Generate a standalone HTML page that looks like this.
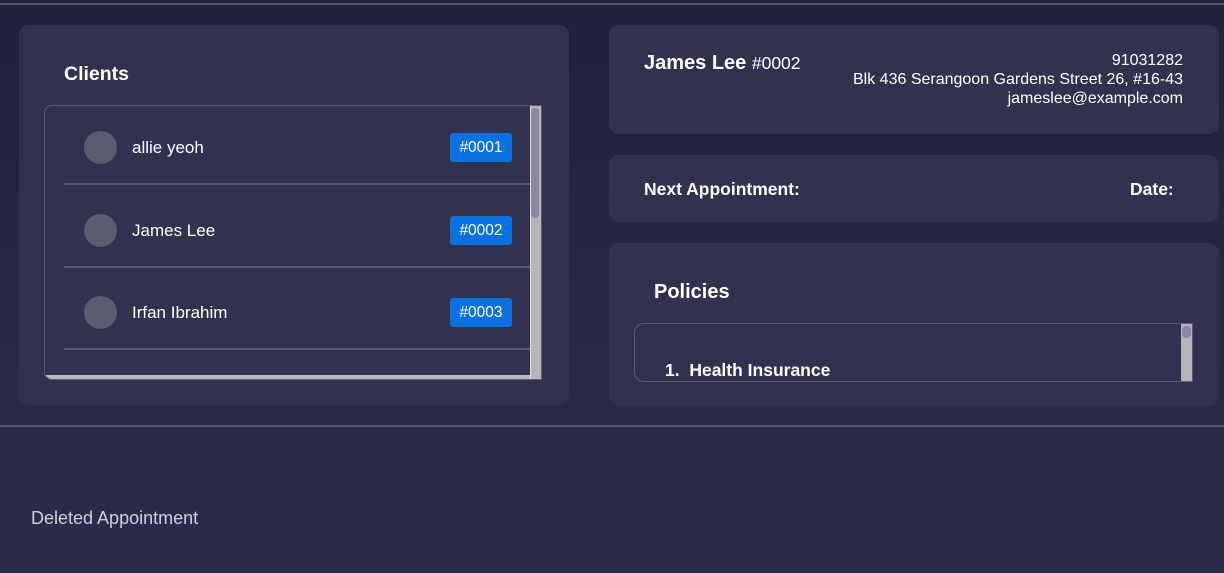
<!DOCTYPE html><html><head><style>
*{margin:0;padding:0;box-sizing:border-box}
body{width:1224px;height:573px;overflow:hidden;font-family:"Liberation Sans",sans-serif;color:#fff;background:linear-gradient(#20213d,#2a2a48 400px,#2c2c4a);position:relative}
.ab{position:absolute}
.panel{position:absolute;background:#323250;border-radius:10px}
.hr{position:absolute;left:0;width:1224px;height:2px;background:#55566a}
.av{position:absolute;left:39px;width:33px;height:33px;border-radius:50%;background:#5b5c6d}
.nm{position:absolute;left:87px;font-size:17px}
.tag{position:absolute;left:405px;width:62px;height:29px;background:#0a72e0;border-radius:3px;font-size:15.5px;text-align:center;line-height:29px}
.sep{position:absolute;left:19px;width:468px;height:2px;background:#5a5b6e}
</style></head><body>
<div class="hr" style="top:3px"></div>
<div class="panel" style="left:19px;top:25px;width:550px;height:380px"></div>
<div class="ab" style="left:64px;top:63px;font-size:19.5px;font-weight:bold">Clients</div>
<div class="ab" style="left:44px;top:105px;width:498px;height:275px;border:1px solid #5c5d70;border-radius:8px 0 0 8px;overflow:hidden">
 <div class="av" style="top:25px"></div><div class="nm" style="top:32px">allie yeoh</div><div class="tag" style="top:27px">#0001</div>
 <div class="sep" style="top:77px"></div>
 <div class="av" style="top:108px"></div><div class="nm" style="top:115px">James Lee</div><div class="tag" style="top:110px">#0002</div>
 <div class="sep" style="top:160px"></div>
 <div class="av" style="top:190px"></div><div class="nm" style="top:197px">Irfan Ibrahim</div><div class="tag" style="top:192px">#0003</div>
 <div class="sep" style="top:242px"></div>
 <div class="ab" style="left:0;bottom:0;width:498px;height:4px;background:#b8b8bc"></div>
 <div class="ab" style="right:0;top:0;width:11px;height:275px;background:#b5b5b8;border-left:1px solid #ddd"></div>
 <div class="ab" style="right:2px;top:2px;width:8px;height:110px;background:#8c86a2;border-radius:4px"></div>
</div>
<div class="panel" style="left:609px;top:25px;width:610px;height:109px"></div>
<div class="ab" style="left:644px;top:52px;font-size:20px"><b>James Lee</b> <span style="font-size:17.5px">#0002</span></div>
<div class="ab" style="right:41px;top:51px;font-size:16px;text-align:right;line-height:19px">91031282<br>Blk 436 Serangoon Gardens Street 26, #16-43<br>jameslee@example.com</div>
<div class="panel" style="left:609px;top:155px;width:610px;height:67px"></div>
<div class="ab" style="left:644px;top:179px;font-size:17.5px;font-weight:bold">Next Appointment:</div>
<div class="ab" style="left:1130px;top:179px;font-size:17.5px;font-weight:bold">Date:</div>
<div class="panel" style="left:609px;top:243px;width:610px;height:163px"></div>
<div class="ab" style="left:654px;top:281px;font-size:20px;font-weight:bold">Policies</div>
<div class="ab" style="left:634px;top:323px;width:559px;height:59px;border:1px solid #5c5d70;border-radius:10px 0 0 10px;overflow:hidden">
 <div class="ab" style="left:30px;top:36px;font-size:17.5px;font-weight:bold">1.&nbsp; Health Insurance</div>
 <div class="ab" style="right:0;top:0;width:11px;height:59px;background:#b5b5b8"></div>
 <div class="ab" style="right:1px;top:2px;width:9px;height:12px;background:#8c86a2;border-radius:4px"></div>
</div>
<div class="hr" style="top:425px"></div>
<div class="ab" style="left:31px;top:508px;font-size:18px;color:#d0d0d8">Deleted Appointment</div>
</body></html>
